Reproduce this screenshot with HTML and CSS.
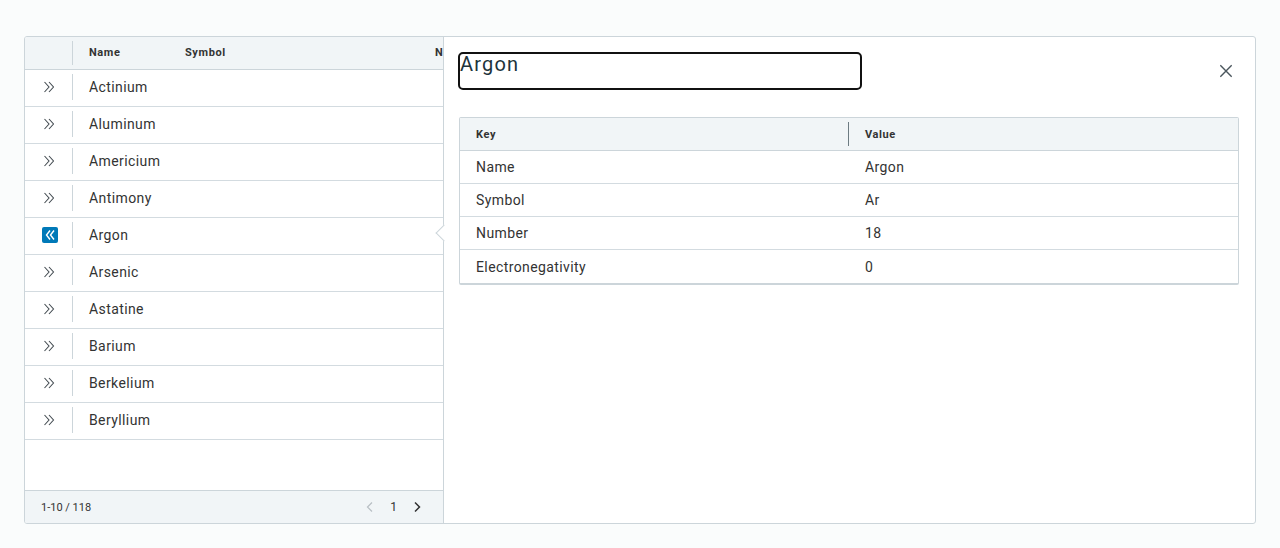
FILE: index.html
```html
<!DOCTYPE html>
<html>
<head>
<meta charset="utf-8">
<link rel="stylesheet" href="styles.css">
</head>
<body>
<div class="datagrid">
  <div class="grid-main">
    <div class="grid-head">
      <div class="cell-exp divided"></div>
      <div class="hcell col-name">Name</div>
      <div class="hcell col-symbol">Symbol</div>
      <div class="hcell col-number">Number</div>
    </div>
    <div class="row"><div class="cell-exp divided"><svg class="chev" viewBox="0 0 14 14"><path d="M2.5 2 L7 7 L2.5 12 M7 2 L11.5 7 L7 12"/></svg></div><div class="cell col-name">Actinium</div></div>
    <div class="row"><div class="cell-exp divided"><svg class="chev" viewBox="0 0 14 14"><path d="M2.5 2 L7 7 L2.5 12 M7 2 L11.5 7 L7 12"/></svg></div><div class="cell col-name">Aluminum</div></div>
    <div class="row"><div class="cell-exp divided"><svg class="chev" viewBox="0 0 14 14"><path d="M2.5 2 L7 7 L2.5 12 M7 2 L11.5 7 L7 12"/></svg></div><div class="cell col-name">Americium</div></div>
    <div class="row"><div class="cell-exp divided"><svg class="chev" viewBox="0 0 14 14"><path d="M2.5 2 L7 7 L2.5 12 M7 2 L11.5 7 L7 12"/></svg></div><div class="cell col-name">Antimony</div></div>
    <div class="row"><div class="cell-exp divided"><span class="chev-active"><svg viewBox="0 0 16 16"><path d="M8 3.5 L4.5 8 L8 12.5 M12 3.5 L8.5 8 L12 12.5"/></svg></span></div><div class="cell col-name">Argon</div></div>
    <div class="row"><div class="cell-exp divided"><svg class="chev" viewBox="0 0 14 14"><path d="M2.5 2 L7 7 L2.5 12 M7 2 L11.5 7 L7 12"/></svg></div><div class="cell col-name">Arsenic</div></div>
    <div class="row"><div class="cell-exp divided"><svg class="chev" viewBox="0 0 14 14"><path d="M2.5 2 L7 7 L2.5 12 M7 2 L11.5 7 L7 12"/></svg></div><div class="cell col-name">Astatine</div></div>
    <div class="row"><div class="cell-exp divided"><svg class="chev" viewBox="0 0 14 14"><path d="M2.5 2 L7 7 L2.5 12 M7 2 L11.5 7 L7 12"/></svg></div><div class="cell col-name">Barium</div></div>
    <div class="row"><div class="cell-exp divided"><svg class="chev" viewBox="0 0 14 14"><path d="M2.5 2 L7 7 L2.5 12 M7 2 L11.5 7 L7 12"/></svg></div><div class="cell col-name">Berkelium</div></div>
    <div class="row"><div class="cell-exp divided"><svg class="chev" viewBox="0 0 14 14"><path d="M2.5 2 L7 7 L2.5 12 M7 2 L11.5 7 L7 12"/></svg></div><div class="cell col-name">Beryllium</div></div>
    <div class="spacer"></div>
    <div class="grid-foot">
      <span class="foot-desc">1-10 / 118</span>
      <div class="pager">
        <svg class="pg pg-off" viewBox="0 0 10 12"><path d="M7 1.5 L2.5 6 L7 10.5"/></svg>
        <span class="pg-num">1</span>
        <svg class="pg pg-on" viewBox="0 0 10 12"><path d="M3 1.5 L7.5 6 L3 10.5"/></svg>
      </div>
    </div>
  </div>
  <div class="pane">
    <span class="caret"></span>
    <div class="pane-head">
      <div class="pane-title">Argon</div>
      <svg class="close" viewBox="0 0 16 16"><path d="M1.5 1.5 L14.5 14.5 M14.5 1.5 L1.5 14.5"/></svg>
    </div>
    <div class="kv">
      <div class="kv-head">
        <div class="kv-h kv-key">Key</div>
        <div class="kv-h kv-val">Value</div>
      </div>
      <div class="kv-row"><div class="kv-c">Name</div><div class="kv-c">Argon</div></div>
      <div class="kv-row"><div class="kv-c">Symbol</div><div class="kv-c">Ar</div></div>
      <div class="kv-row"><div class="kv-c">Number</div><div class="kv-c">18</div></div>
      <div class="kv-row"><div class="kv-c">Electronegativity</div><div class="kv-c">0</div></div>
    </div>
  </div>
</div>
</body>
</html>
```

FILE: styles.css
```css
* { box-sizing: border-box; }
html, body { margin: 0; padding: 0; }
body {
  background: #fafcfc;
  font-family: Roboto, "Liberation Sans", sans-serif;
  color: #333;
  padding: 36px 24px 0;
}
.datagrid {
  display: flex;
  height: 488px;
  border: 1px solid #ccd5da;
  border-radius: 3px;
  background: #fff;
  overflow: hidden;
}
.grid-main {
  width: 418px;
  flex: 0 0 418px;
  display: flex;
  flex-direction: column;
}
.grid-head {
  display: flex;
  height: 33px;
  flex: 0 0 33px;
  background: #f1f5f7;
  border-bottom: 1px solid #ccd5da;
  overflow: hidden;
  white-space: nowrap;
}
.cell-exp {
  width: 48px;
  flex: 0 0 48px;
  display: flex;
  align-items: center;
  justify-content: center;
  position: relative;
}
.divided::after {
  content: "";
  position: absolute;
  right: 0;
  top: 50%;
  width: 1px;
  height: 26px;
  margin-top: -14px;
  background: #ccd5da;
}
.grid-head .divided::after { height: 24px; margin-top: -12px; }
.hcell {
  font-size: 11px;
  font-weight: 700;
  color: #333;
  padding: 0 0 2px 16px;
  display: flex;
  align-items: center;
  letter-spacing: 0.6px;
}
.col-name { width: 96px; flex: 0 0 96px; }
.col-symbol { width: 250px; flex: 0 0 250px; }
.col-number { width: 120px; flex: 0 0 120px; }
.row {
  display: flex;
  height: 37px;
  flex: 0 0 37px;
  border-bottom: 1px solid #d3dbe0;
}
.row .cell-exp { padding-bottom: 2px; }
.cell {
  font-size: 14px;
  padding: 0 0 3px 16px;
  display: flex;
  align-items: center;
  color: #333;
  letter-spacing: 0.4px;
}
.chev { width: 14px; height: 14px; margin-left: -1px; }
.chev path { fill: none; stroke: #444c52; stroke-width: 1.1; }
.chev-active {
  width: 16px;
  height: 16px;
  background: #0079b8;
  border-radius: 2px;
  display: flex;
  margin-left: 1px;
}
.chev-active svg { width: 16px; height: 16px; }
.chev-active path { fill: none; stroke: #fff; stroke-width: 1.4; }
.spacer { flex: 1; }
.grid-foot {
  height: 33px;
  flex: 0 0 33px;
  background: #f1f5f7;
  border-top: 1px solid #ccd5da;
  display: flex;
  align-items: center;
  padding: 0 16px;
  font-size: 11px;
  color: #333;
}
.foot-desc { flex: 1; }
.pager { display: flex; align-items: center; gap: 15px; margin-right: 5px; }
.pg { width: 10px; height: 12px; }
.pg path { fill: none; stroke-width: 1.5; }
.pg-off path { stroke: #b8bfc4; stroke-width: 1.2; }
.pg-on path { stroke: #333; }
.pg-num { font-size: 12px; }
.pane {
  flex: 1;
  position: relative;
  border-left: 1px solid #ccd5da;
  padding: 15px 16px 0 15px;
}
.caret {
  position: absolute;
  left: -6px;
  top: 190px;
  width: 12px;
  height: 12px;
  background: #fff;
  border-left: 1px solid #ccd5da;
  border-bottom: 1px solid #ccd5da;
  transform: rotate(45deg);
}
.pane-head {
  display: flex;
  align-items: flex-start;
  justify-content: space-between;
  height: 65px;
}
.pane-title {
  margin: 2px 0 0 1px;
  width: 400px;
  height: 34px;
  font-size: 20px;
  line-height: 20px;
  color: #21333b;
  letter-spacing: 1.2px;
  outline: 2px solid #111;
  border-radius: 3px;
}
.close { width: 14px; height: 14px; margin: 12px 6px 0 0; }
.close path { fill: none; stroke: #4a555c; stroke-width: 1.6; }
.kv {
  border: 1px solid #ccd5da;
  border-bottom-width: 2px;
  border-radius: 2px;
}
.kv-head {
  display: flex;
  height: 33px;
  background: #f1f5f7;
  border-bottom: 1px solid #ccd5da;
}
.kv-h {
  flex: 1;
  font-size: 11px;
  font-weight: 700;
  padding-left: 16px;
  display: flex;
  align-items: center;
  letter-spacing: 0.6px;
  position: relative;
}
.kv-key::after {
  content: "";
  position: absolute;
  right: 0;
  top: 4px;
  bottom: 4px;
  width: 1px;
  background: #6d7b82;
}
.kv-row {
  display: flex;
  height: 33px;
  border-bottom: 1px solid #d3dbe0;
}
.kv-row:last-child { border-bottom: none; }
.kv-c {
  flex: 1;
  font-size: 14px;
  padding-left: 16px;
  display: flex;
  align-items: center;
  letter-spacing: 0.4px;
}
```
